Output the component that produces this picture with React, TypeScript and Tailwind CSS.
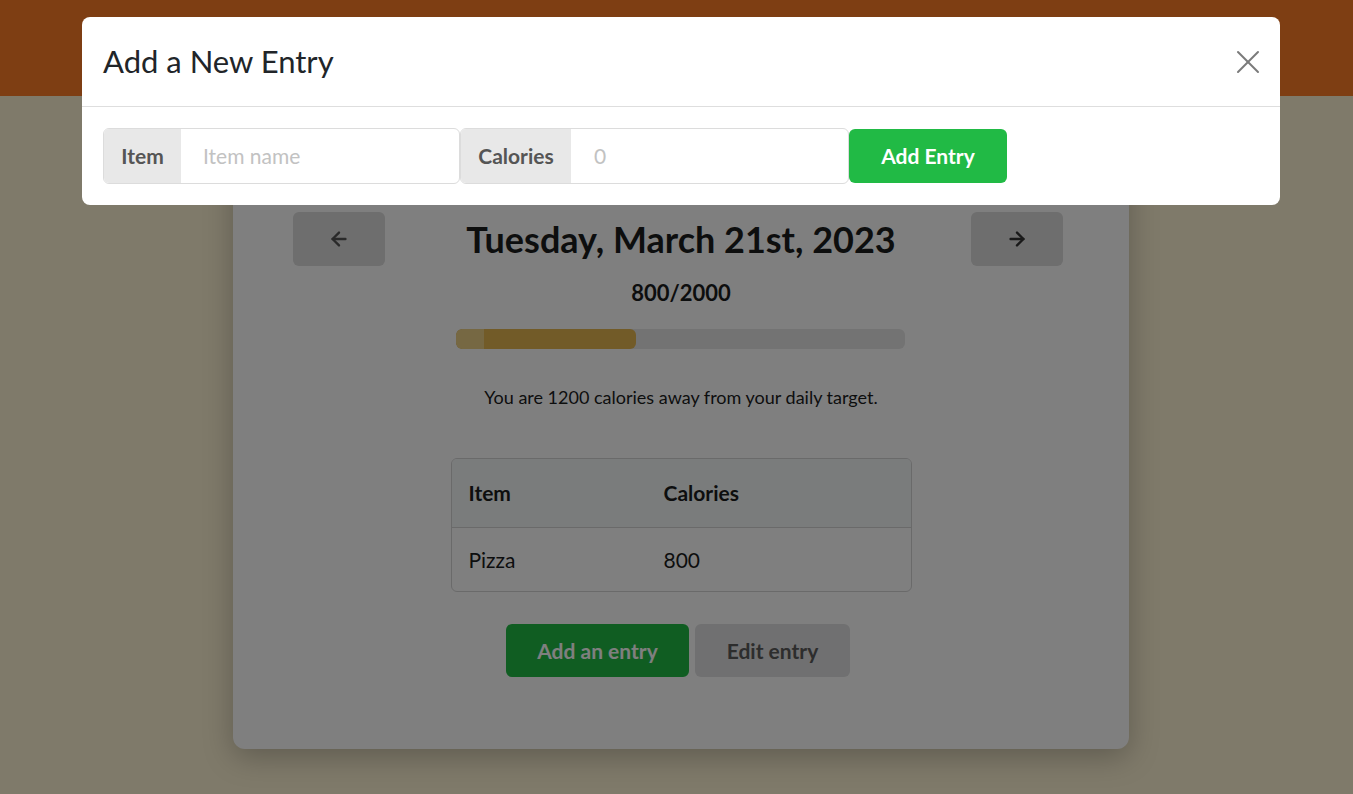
import React from "react";

export default function App() {
  const font = { fontFamily: "Lato, 'Noto Sans', sans-serif" };
  return (
    <div className="relative min-h-[794px] w-full bg-[#fef4d4] overflow-hidden" style={font}>
      <div className="h-[96px] bg-[#fd7c26]" />
      <div className="pl-[9px] pt-[54px]">
        <div className="mx-auto w-[896px] rounded-xl bg-white shadow-[0_8px_30px_rgba(0,0,0,0.25)] pt-[62px] pb-[72px]">
          <div className="grid grid-cols-[1fr_auto_1fr] items-center pl-[60px] pr-[66px]">
            <button className="flex h-[54px] w-[92px] items-center justify-center rounded-md bg-[#dcdcdc] text-[#555]">
              <svg width="22" height="22" viewBox="0 0 24 24" fill="none" stroke="currentColor" strokeWidth="2.6" strokeLinecap="round" strokeLinejoin="round">
                <path d="M19 12H5" />
                <path d="M12 19l-7-7 7-7" />
              </svg>
            </button>
            <h1 className="translate-x-[3px] text-[36px] font-bold leading-[42px] text-[#1b1c1d]">Tuesday, March 21st, 2023</h1>
            <button className="flex h-[54px] w-[92px] items-center justify-center justify-self-end rounded-md bg-[#dcdcdc] text-[#333]">
              <svg width="22" height="22" viewBox="0 0 24 24" fill="none" stroke="currentColor" strokeWidth="2.6" strokeLinecap="round" strokeLinejoin="round">
                <path d="M5 12h14" />
                <path d="M12 5l7 7-7 7" />
              </svg>
            </button>
          </div>
          <div className="mt-[14px] text-center text-[22px] font-bold leading-[26px] text-[#1b1c1d]">800/2000</div>
          <div className="mx-auto mt-[23px] flex h-[20px] w-[449px] overflow-hidden rounded-md bg-[#e6e6e6] translate-x-[-1px]">
            <div className="flex h-full w-[180px] overflow-hidden rounded-md bg-[#e4b650]">
              <div className="h-full w-[28px] bg-[#ecd086]" />
            </div>
          </div>
          <p className="mt-[36px] text-center text-[18px] leading-[24px] text-[#1b1c1d]">
            You are 1200 calories away from your daily target.
          </p>
          <div className="mx-auto mt-[49px] w-[461px] overflow-hidden rounded-md border border-[#d4d4d5]">
            <div className="grid h-[69px] grid-cols-[212px_1fr] items-center border-b border-[#d4d4d5] bg-[#f4f8f8] pl-[17px] text-[21px] font-bold text-[#1b1c1d]">
              <span>Item</span>
              <span className="-ml-[17px]">Calories</span>
            </div>
            <div className="grid h-[63px] grid-cols-[212px_1fr] items-center pl-[17px] text-[21px] text-[#1b1c1d]">
              <span>Pizza</span>
              <span className="-ml-[17px]">800</span>
            </div>
          </div>
          <div className="mt-[32px] flex justify-center gap-[6px] pr-[6px]">
            <button className="h-[53px] w-[183px] rounded-md bg-[#21ba45] text-[21px] font-bold text-white">Add an entry</button>
            <button className="h-[53px] w-[155px] rounded-md bg-[#e0e1e2] text-[21px] font-bold text-[#5a5a5a]">Edit entry</button>
          </div>
        </div>
      </div>

      <div className="absolute inset-0 bg-black/50" />

      <div className="absolute left-0 right-0 top-[17px] pl-[9px]">
        <div className="mx-auto w-[1198px] rounded-lg bg-white">
          <div className="flex h-[90px] items-center justify-between border-b border-[#dedede] pl-[21px] pr-[20px]">
            <h2 className="text-[31px] font-normal leading-none text-[#212529]">Add a New Entry</h2>
            <svg width="24" height="24" viewBox="0 0 24 24" className="text-[#7a7a7a]" fill="none" stroke="currentColor" strokeWidth="2" strokeLinecap="round">
              <path d="M2 2l20 20" />
              <path d="M22 2L2 22" />
            </svg>
          </div>
          <div className="flex items-center px-[21px] pt-[21px] pb-[21px]">
            <div className="flex h-[56px] overflow-hidden rounded-md border border-[#dcdcdc]">
              <div className="flex w-[77px] items-center justify-center bg-[#e8e8e8] text-[21px] font-bold text-[#555]">Item</div>
              <div className="flex w-[278px] items-center pl-[22px] text-[21px] text-[#c2c2c2]">Item name</div>
            </div>
            <div className="flex h-[56px] overflow-hidden rounded-md border border-[#dcdcdc]">
              <div className="flex w-[110px] items-center justify-center bg-[#e8e8e8] text-[21px] font-bold text-[#555]">Calories</div>
              <div className="flex w-[277px] items-center pl-[23px] text-[21px] text-[#c2c2c2]">0</div>
            </div>
            <button className="h-[54px] w-[158px] rounded-md bg-[#21ba45] text-[21px] font-bold text-white">Add Entry</button>
          </div>
        </div>
      </div>
    </div>
  );
}
